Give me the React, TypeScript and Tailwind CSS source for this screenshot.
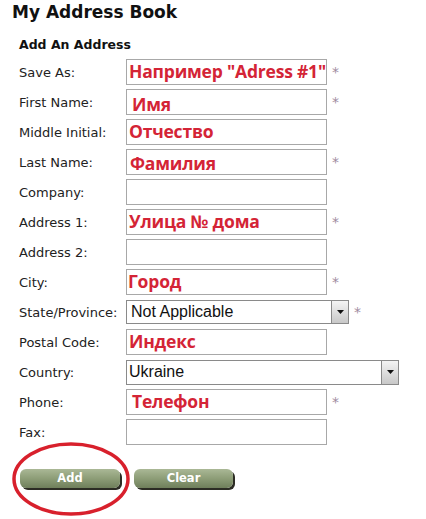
const rows: { label: string; value?: string; req?: boolean; kind?: 'state' | 'country'; pad?: string }[] = [
  { label: 'Save As:', value: 'Например "Adress #1"', req: true },
  { label: 'First Name:', value: 'Имя', req: true, pad: 'pt-[6px] pl-[5px]' },
  { label: 'Middle Initial:', value: 'Отчество' },
  { label: 'Last Name:', value: 'Фамилия', req: true, pad: 'pt-[3px] pl-[3px]' },
  { label: 'Company:' },
  { label: 'Address 1:', value: 'Улица № дома', req: true },
  { label: 'Address 2:' },
  { label: 'City:', value: 'Город', req: true, pad: 'pl-[1px]' },
  { label: 'State/Province:', kind: 'state', req: true },
  { label: 'Postal Code:', value: 'Индекс' },
  { label: 'Country:', kind: 'country' },
  { label: 'Phone:', value: 'Телефон', req: true, pad: 'pl-[5px]' },
  { label: 'Fax:' },
]

function Arrow() {
  return (
    <div className="w-[17px] h-full border-l border-[#8a8a8a] bg-gradient-to-b from-[#f4f4f4] to-[#c8c8c8] flex items-center justify-center">
      <svg width="7" height="4" viewBox="0 0 7 4">
        <path d="M0 0h7L3.5 4z" fill="#111" />
      </svg>
    </div>
  )
}

export default function App() {
  return (
    <div className="w-[426px] h-[519px] bg-white relative font-['DejaVu_Sans',Verdana,sans-serif] text-[#222]">
      <h1 className="pl-[12px] pt-[1px] text-[17px] font-bold leading-[22px] text-[#111]">My Address Book</h1>

      <div className="pl-[19px] pt-[14px]">
        <h2 className="text-[12.5px] font-bold leading-[16px] text-[#111] mb-[4px]">Add An Address</h2>

        <div className="flex flex-col">
          {rows.map((r, i) => (
            <div key={i} className="flex items-center h-[30px]">
              <div className="w-[107px] text-[13px] leading-none text-[#222]">{r.label}</div>
              {r.kind === 'state' ? (
                <div className="w-[223px] h-[24px] border border-[#8a8a8a] flex items-stretch font-['Liberation_Sans',Arial,sans-serif] text-[16px]">
                  <div className="flex-1 flex items-center pl-[4px] text-[#111]">Not Applicable</div>
                  <Arrow />
                </div>
              ) : r.kind === 'country' ? (
                <div className="w-[273px] h-[25px] border border-[#8a8a8a] flex items-stretch font-['Liberation_Sans',Arial,sans-serif] text-[16px]">
                  <div className="flex-1 flex items-center pl-[2px] text-[#111]">Ukraine</div>
                  <Arrow />
                </div>
              ) : (
                <div className={`w-[201px] h-[26px] border border-[#a8a8a8] flex items-center overflow-hidden whitespace-nowrap font-['Open_Sans',sans-serif] font-bold text-[17.5px] leading-none text-[#d42436] tracking-[-0.2px] ${r.pad ?? 'pl-[2px]'}`}>
                  {r.value}
                </div>
              )}
              {r.req && <span className="ml-[5px] text-[14px] text-[#a08aa0] leading-none">*</span>}
            </div>
          ))}
        </div>

        <div className="flex gap-[14px] mt-[22px] ml-[1px]">
          <button className="w-[100px] h-[19px] rounded-[6px] bg-gradient-to-b from-[#aab896] via-[#8d9d77] to-[#6f7f5b] shadow-[2px_2px_0_#2c2c24] text-white font-bold text-[11.5px] leading-none">Add</button>
          <button className="w-[99px] h-[19px] rounded-[6px] bg-gradient-to-b from-[#aab896] via-[#8d9d77] to-[#6f7f5b] shadow-[2px_2px_0_#2c2c24] text-white font-bold text-[11.5px] leading-none">Clear</button>
        </div>
      </div>

      <svg className="absolute left-[10px] top-[440px]" width="124" height="79" viewBox="0 0 124 79">
        <ellipse cx="61" cy="39" rx="57" ry="35" fill="none" stroke="#d8202c" strokeWidth="3.5" />
      </svg>
    </div>
  )
}
